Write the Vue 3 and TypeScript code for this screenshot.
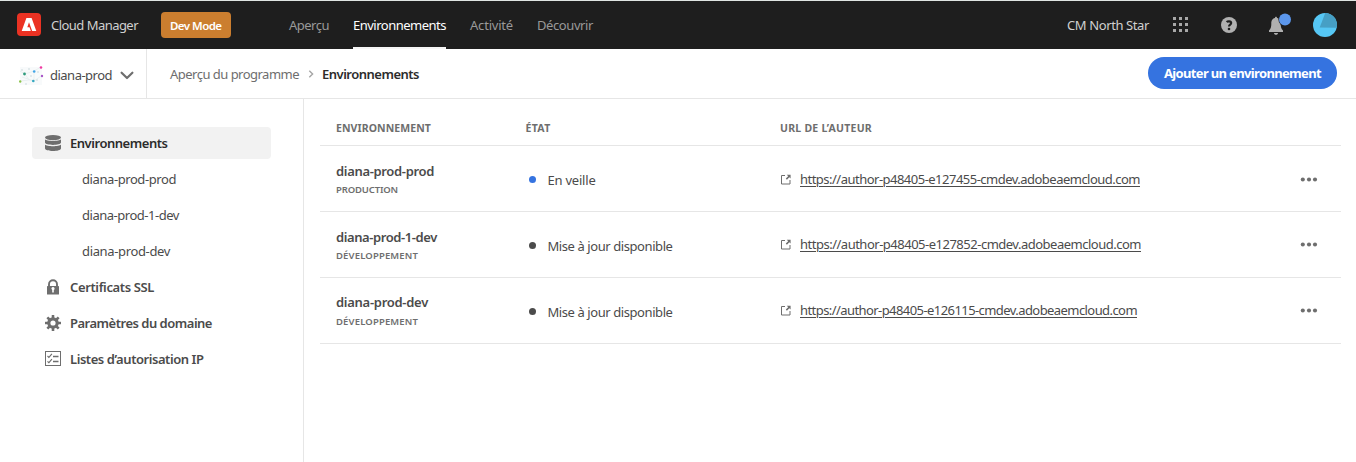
<script setup lang="ts">
import type { Directive } from 'vue'

interface Tab { label: string; width: number; active?: boolean }
interface NavItem { label: string; width: number; icon?: string; active?: boolean }
interface Environment {
  name: string
  nameWidth: number
  kind: string
  kindWidth: number
  status: string
  statusWidth: number
  tone: string
  url: string
  urlWidth: number
}

// Tracks a label so that it takes up the given width in pixels.
const vFit: Directive<HTMLElement, number> = {
  mounted(el, { value }) {
    const count = (el.textContent ?? '').length
    const natural = el.getBoundingClientRect().width
    if (count > 0) el.style.letterSpacing = `${(value - natural) / count}px`
  },
}

const tabs: Tab[] = [
  { label: 'Aperçu', width: 40 },
  { label: 'Environnements', width: 93, active: true },
  { label: 'Activité', width: 43 },
  { label: 'Découvrir', width: 56 },
]

const nav: NavItem[] = [
  { label: 'Environnements', width: 97.5, icon: 'data', active: true },
  { label: 'diana-prod-prod', width: 94 },
  { label: 'diana-prod-1-dev', width: 97 },
  { label: 'diana-prod-dev', width: 88 },
  { label: 'Certificats SSL', width: 84, icon: 'lock' },
  { label: 'Paramètres du domaine', width: 142, icon: 'gear' },
  { label: 'Listes d’autorisation IP', width: 133.5, icon: 'list' },
]

const environments: Environment[] = [
  {
    name: 'diana-prod-prod', nameWidth: 98, kind: 'PRODUCTION', kindWidth: 62,
    status: 'En veille', statusWidth: 48, tone: 'asleep',
    url: 'https://author-p48405-e127455-cmdev.adobeaemcloud.com', urlWidth: 340,
  },
  {
    name: 'diana-prod-1-dev', nameWidth: 101, kind: 'DÉVELOPPEMENT', kindWidth: 82,
    status: 'Mise à jour disponible', statusWidth: 125, tone: 'update',
    url: 'https://author-p48405-e127852-cmdev.adobeaemcloud.com', urlWidth: 341,
  },
  {
    name: 'diana-prod-dev', nameWidth: 92, kind: 'DÉVELOPPEMENT', kindWidth: 82,
    status: 'Mise à jour disponible', statusWidth: 125, tone: 'update',
    url: 'https://author-p48405-e126115-cmdev.adobeaemcloud.com', urlWidth: 337,
  },
]

const teeth = [0, 45, 90, 135, 180, 225, 270, 315]
const gridSteps = [0, 6, 12]
</script>

<template>
  <div class="page">
    <header class="topbar">
      <svg class="logo" width="24" height="24" viewBox="0 0 24 24">
        <rect width="24" height="23" rx="4" fill="#eb3223" />
        <path d="M9.400 5h5.200l4.700 13h-4.100L12 9.300 10.300 14.200h2.200l1.300 3.800H4.700z" fill="#fff" />
      </svg>
      <span class="brand"><span v-fit="87">Cloud Manager</span></span>
      <span class="mode"><span v-fit="51.5">Dev Mode</span></span>
      <nav class="tabs">
        <a v-for="tab in tabs" :key="tab.label" class="tab" :class="{ active: tab.active }">
          <span v-fit="tab.width">{{ tab.label }}</span>
        </a>
      </nav>
      <span class="org"><span v-fit="82">CM North Star</span></span>
      <svg class="apps" width="16" height="16" viewBox="0 0 16 16" fill="#a8a8a8">
        <template v-for="y in gridSteps" :key="y">
          <rect v-for="x in gridSteps" :key="x" :x="x" :y="y" width="3" height="3" />
        </template>
      </svg>
      <svg class="help" width="16" height="16" viewBox="0 0 16 16">
        <circle cx="8" cy="8" r="8" fill="#b0b0b0" />
        <path d="M5.600 5.100C6.500 4.200 10.200 3.700 10.200 6.100 10.200 7.700 8 7.700 8 9.600" fill="none" stroke="#1e1e1e" stroke-width="2.100" />
        <circle cx="8" cy="12" r="1.300" fill="#1e1e1e" />
      </svg>
      <svg class="bell" width="24" height="24" viewBox="0 0 24 24">
        <path d="M8 5.100c0-1.700 2-1.700 2 0C13 5.800 13.700 8 13.700 11c0 3 .6 4.800 2.300 6.400V19H2v-1.600C3.700 15.800 4.300 14 4.300 11 4.300 8 5 5.800 8 5.100zM7 20h4c0 1-.8 1.800-2 1.800S7 21 7 20z" fill="#b0b0b0" />
        <circle cx="18" cy="6.500" r="6.600" fill="#1e1e1e" />
        <circle cx="18" cy="6.500" r="6" fill="#5c97ec" />
      </svg>
      <svg class="avatar" width="24" height="24" viewBox="0 0 24 24">
        <circle cx="12" cy="12" r="12" fill="#56c7f5" />
        <path d="M12.200 0A12 12 0 0 1 23.700 14.800L6.700 14.500z" fill="#469fc5" />
      </svg>
    </header>

    <div class="subbar">
      <div class="program">
        <svg width="25" height="23" viewBox="0 0 25 23">
          <rect x="1" y="3" width="22" height="18" fill="#f8fafb" />
          <path d="M1 7l5 3 9-3 7-4M6 10l4 6 5 1 7-5M1 17l9-1M15 7v10M3 13l12 4" fill="none" stroke="#e6edef" stroke-width=".8" />
          <g fill="#dbe4e7">
            <circle cx="3" cy="6" r="1" /><circle cx="10" cy="5" r="1" /><circle cx="19" cy="8" r="1" />
            <circle cx="12" cy="12" r="1" /><circle cx="18" cy="16" r="1" /><circle cx="7" cy="20" r="1" />
          </g>
          <circle cx="22" cy="3.500" r="1.300" fill="#f03aa2" />
          <circle cx="15.200" cy="7.500" r="1.300" fill="#3fa4e8" />
          <circle cx="5.500" cy="10" r="1.400" fill="#2e9b7c" />
          <circle cx="23" cy="12" r="1.200" fill="#a856c8" />
          <circle cx="14.300" cy="17" r="1.300" fill="#35a8c0" />
          <circle cx="1.200" cy="17.500" r="1.200" fill="#8bc34a" />
        </svg>
        <span class="program-name"><span v-fit="62">diana-prod</span></span>
        <svg width="14" height="9" viewBox="0 0 14 9">
          <path d="M1.600 1.700L7 7l5.400-5.300" fill="none" stroke="#6e6e6e" stroke-width="2.200" stroke-linecap="round" stroke-linejoin="round" />
        </svg>
      </div>
      <div class="crumbs">
        <span class="crumb"><span v-fit="129">Aperçu du programme</span></span>
        <svg width="6" height="8" viewBox="0 0 6 8">
          <path d="M1.300 .8L4.600 4 1.300 7.200" fill="none" stroke="#a5a5a5" stroke-width="1.400" />
        </svg>
        <span class="crumb current"><span v-fit="97">Environnements</span></span>
      </div>
      <button class="add" type="button"><span v-fit="157">Ajouter un environnement</span></button>
    </div>

    <div class="body">
      <aside class="sidebar">
        <a v-for="item in nav" :key="item.label" class="item" :class="{ active: item.active, child: !item.icon }">
          <svg v-if="item.icon" width="16" height="16" viewBox="0 0 16 16">
            <g v-if="item.icon === 'data'" fill="#6e6e6e">
              <ellipse cx="8" cy="2.600" rx="8" ry="2.600" />
              <path d="M0 4.200c1.500 2.300 14.500 2.300 16 0v3.400c0 3.200-16 3.200-16 0z" />
              <path d="M0 9.400c1.500 2.300 14.500 2.300 16 0v3.800c0 3.700-16 3.700-16 0z" />
            </g>
            <g v-else-if="item.icon === 'lock'">
              <path d="M4 8V5.300a4 4 0 0 1 8 0V8" fill="none" stroke="#6e6e6e" stroke-width="1.900" />
              <rect x="2" y="7" width="12" height="8.500" rx=".5" fill="#6e6e6e" />
              <path d="M6.400 9.700a1.600 1.600 0 1 1 2.400 1.400V13.500H7.200v-2.400z" fill="#fff" />
            </g>
            <g v-else-if="item.icon === 'gear'" fill="#6e6e6e">
              <rect v-for="angle in teeth" :key="angle" x="6.700" y="0" width="2.600" height="4" rx=".3" :transform="`rotate(${angle} 8 8)`" />
              <circle cx="8" cy="8" r="4.200" fill="none" stroke="#6e6e6e" stroke-width="3.200" />
            </g>
            <g v-else fill="none" stroke="#6e6e6e">
              <rect x=".5" y=".5" width="15" height="14" />
              <path d="M2.500 5l1.400 1.400 3-3.600M2.500 10.300l1.400 1.400 3-3.600" stroke-width="1.100" />
              <path d="M8 5.500h5.500M8 10.500h5.500" stroke-width="1.400" />
            </g>
          </svg>
          <span v-fit="item.width">{{ item.label }}</span>
        </a>
      </aside>

      <main class="table">
        <div class="row head">
          <span class="cell"><span v-fit="95">ENVIRONNEMENT</span></span>
          <span class="cell"><span v-fit="25">ÉTAT</span></span>
          <span class="cell"><span v-fit="92">URL DE L’AUTEUR</span></span>
        </div>
        <div v-for="env in environments" :key="env.name" class="row">
          <div class="cell names">
            <span class="name"><span v-fit="env.nameWidth">{{ env.name }}</span></span>
            <span class="kind"><span v-fit="env.kindWidth">{{ env.kind }}</span></span>
          </div>
          <div class="cell status">
            <i class="dot" :class="env.tone"></i>
            <span v-fit="env.statusWidth">{{ env.status }}</span>
          </div>
          <div class="cell url">
            <svg width="11" height="11" viewBox="0 0 11 11">
              <path d="M5 1.500H1.500v8.500H10V6" fill="none" stroke="#6e6e6e" stroke-width="1" />
              <path d="M6.800 .8H10.600v3.800L9.300 3.300 6.900 5.700 5.800 4.600 8.200 2.200z" fill="#6e6e6e" />
            </svg>
            <a class="link" v-fit="env.urlWidth">{{ env.url }}</a>
          </div>
          <div class="cell more">
            <svg width="18" height="5" viewBox="0 0 18 5" fill="#6e6e6e">
              <circle cx="2.800" cy="2.500" r="2.050" /><circle cx="9" cy="2.500" r="2.050" /><circle cx="15" cy="2.500" r="2.050" />
            </svg>
          </div>
        </div>
      </main>
    </div>
  </div>
</template>

<style>
body {
  background: #fff;
  overflow: hidden;
}
</style>

<style scoped>
.page {
  box-sizing: border-box;
  width: 1356px;
  height: 462px;
  display: flex;
  flex-direction: column;
  background: #fff;
  color: #4b4b4b;
  font: 13px/18px "Noto Sans", "Open Sans", sans-serif;
  white-space: nowrap;
}
svg {
  display: block;
  flex: none;
}
.topbar {
  box-sizing: border-box;
  height: 49px;
  border-top: 1px solid #dfe5e2;
  background: #1e1e1e;
  display: flex;
  align-items: center;
  padding-left: 17px;
  color: #d0d0d0;
}
.brand {
  width: 110px;
  padding-left: 10px;
  box-sizing: border-box;
  margin-right: 10px;
}
.mode {
  box-sizing: border-box;
  width: 70px;
  height: 26px;
  padding: 5px 0 0 9px;
  border-radius: 4px;
  background: #cb7e2f;
  color: #fff;
  font-weight: 600;
  font-size: 11.5px;
  line-height: 17px;
}
.tabs {
  display: flex;
  align-self: stretch;
  gap: 24px;
  margin-left: 58px;
  color: #999;
}
.tab {
  box-sizing: border-box;
  height: 48px;
  padding-top: 15px;
}
.tab.active {
  color: #fff;
  border-bottom: 2px solid #f5f5f5;
}
.org {
  margin-left: auto;
}
.apps {
  margin-left: 24px;
}
.help {
  margin-left: 32px;
}
.bell {
  margin-left: 30px;
}
.avatar {
  margin: 0 19px 0 22px;
}
.subbar {
  box-sizing: border-box;
  height: 50px;
  border-bottom: 1px solid #e6e6e6;
  display: flex;
  align-items: center;
}
.program {
  box-sizing: border-box;
  width: 147px;
  height: 49px;
  border-right: 1px solid #e6e6e6;
  display: flex;
  align-items: center;
  padding: 4px 0 0 19px;
}
.program-name {
  margin: -1px 8px 0 6px;
}
.crumbs {
  display: flex;
  align-items: center;
  margin-left: 23px;
  color: #6e6e6e;
}
.crumbs svg {
  margin: 1px 8px 0 9px;
}
.current {
  color: #2c2c2c;
  font-weight: 600;
}
.add {
  box-sizing: border-box;
  width: 189px;
  height: 32px;
  margin: 0 19px 1px auto;
  padding: 0;
  border: 0;
  border-radius: 16px;
  background: #3573e0;
  color: #fff;
  font: inherit;
  font-weight: 700;
}
.body {
  flex: 1;
  display: flex;
}
.sidebar {
  box-sizing: border-box;
  width: 304px;
  border-right: 1px solid #e6e6e6;
  padding: 28px 32px 0;
  display: flex;
  flex-direction: column;
  gap: 4px;
}
.item {
  box-sizing: border-box;
  height: 32px;
  display: flex;
  align-items: center;
  gap: 9px;
  padding-left: 13px;
  border-radius: 4px;
  font-weight: 600;
}
.item.child {
  padding-left: 50px;
  font-weight: 400;
}
.item.active {
  background: #f2f2f2;
  color: #2c2c2c;
}
.table {
  width: 1021px;
  margin-left: 16px;
}
.row {
  box-sizing: border-box;
  height: 66px;
  border-bottom: 1px solid #e6e6e6;
  display: grid;
  grid-template-columns: 190px 254px 517px 60px;
  padding-left: 16px;
}
.head {
  grid-template-columns: 189.5px 254.500px 1fr;
  height: 47px;
  padding-top: 20px;
  color: #6e6e6e;
  font-size: 10.5px;
  font-weight: 700;
}
.names {
  display: flex;
  flex-direction: column;
  padding-top: 16px;
}
.name {
  font-weight: 600;
}
.kind {
  font-size: 9.5px;
  font-weight: 600;
  line-height: 20px;
  color: #6e6e6e;
}
.row:last-child .names {
  padding-top: 15px;
}
.row:last-child .kind {
  padding-top: 1px;
}
.status {
  display: flex;
  align-items: flex-start;
  gap: 12px;
  padding: 25px 0 0 2.5px;
}
.dot {
  width: 7px;
  height: 7px;
  margin-top: 5px;
  border-radius: 50%;
}
.asleep {
  background: #3573e0;
}
.update {
  background: #4b4b4b;
}
.url {
  display: flex;
  align-items: flex-start;
  gap: 9px;
  padding-top: 24px;
}
.url svg {
  margin-top: 4px;
}
.link {
  text-decoration: underline;
  text-underline-offset: 2px;
  text-decoration-thickness: 1px;
}
.more {
  padding-top: 30.5px;
  margin-left: 3px;
}
.row + .row + .row .url {
  padding-top: 23px;
}
.row + .row + .row .more {
  padding-top: 29.5px;
}
</style>
